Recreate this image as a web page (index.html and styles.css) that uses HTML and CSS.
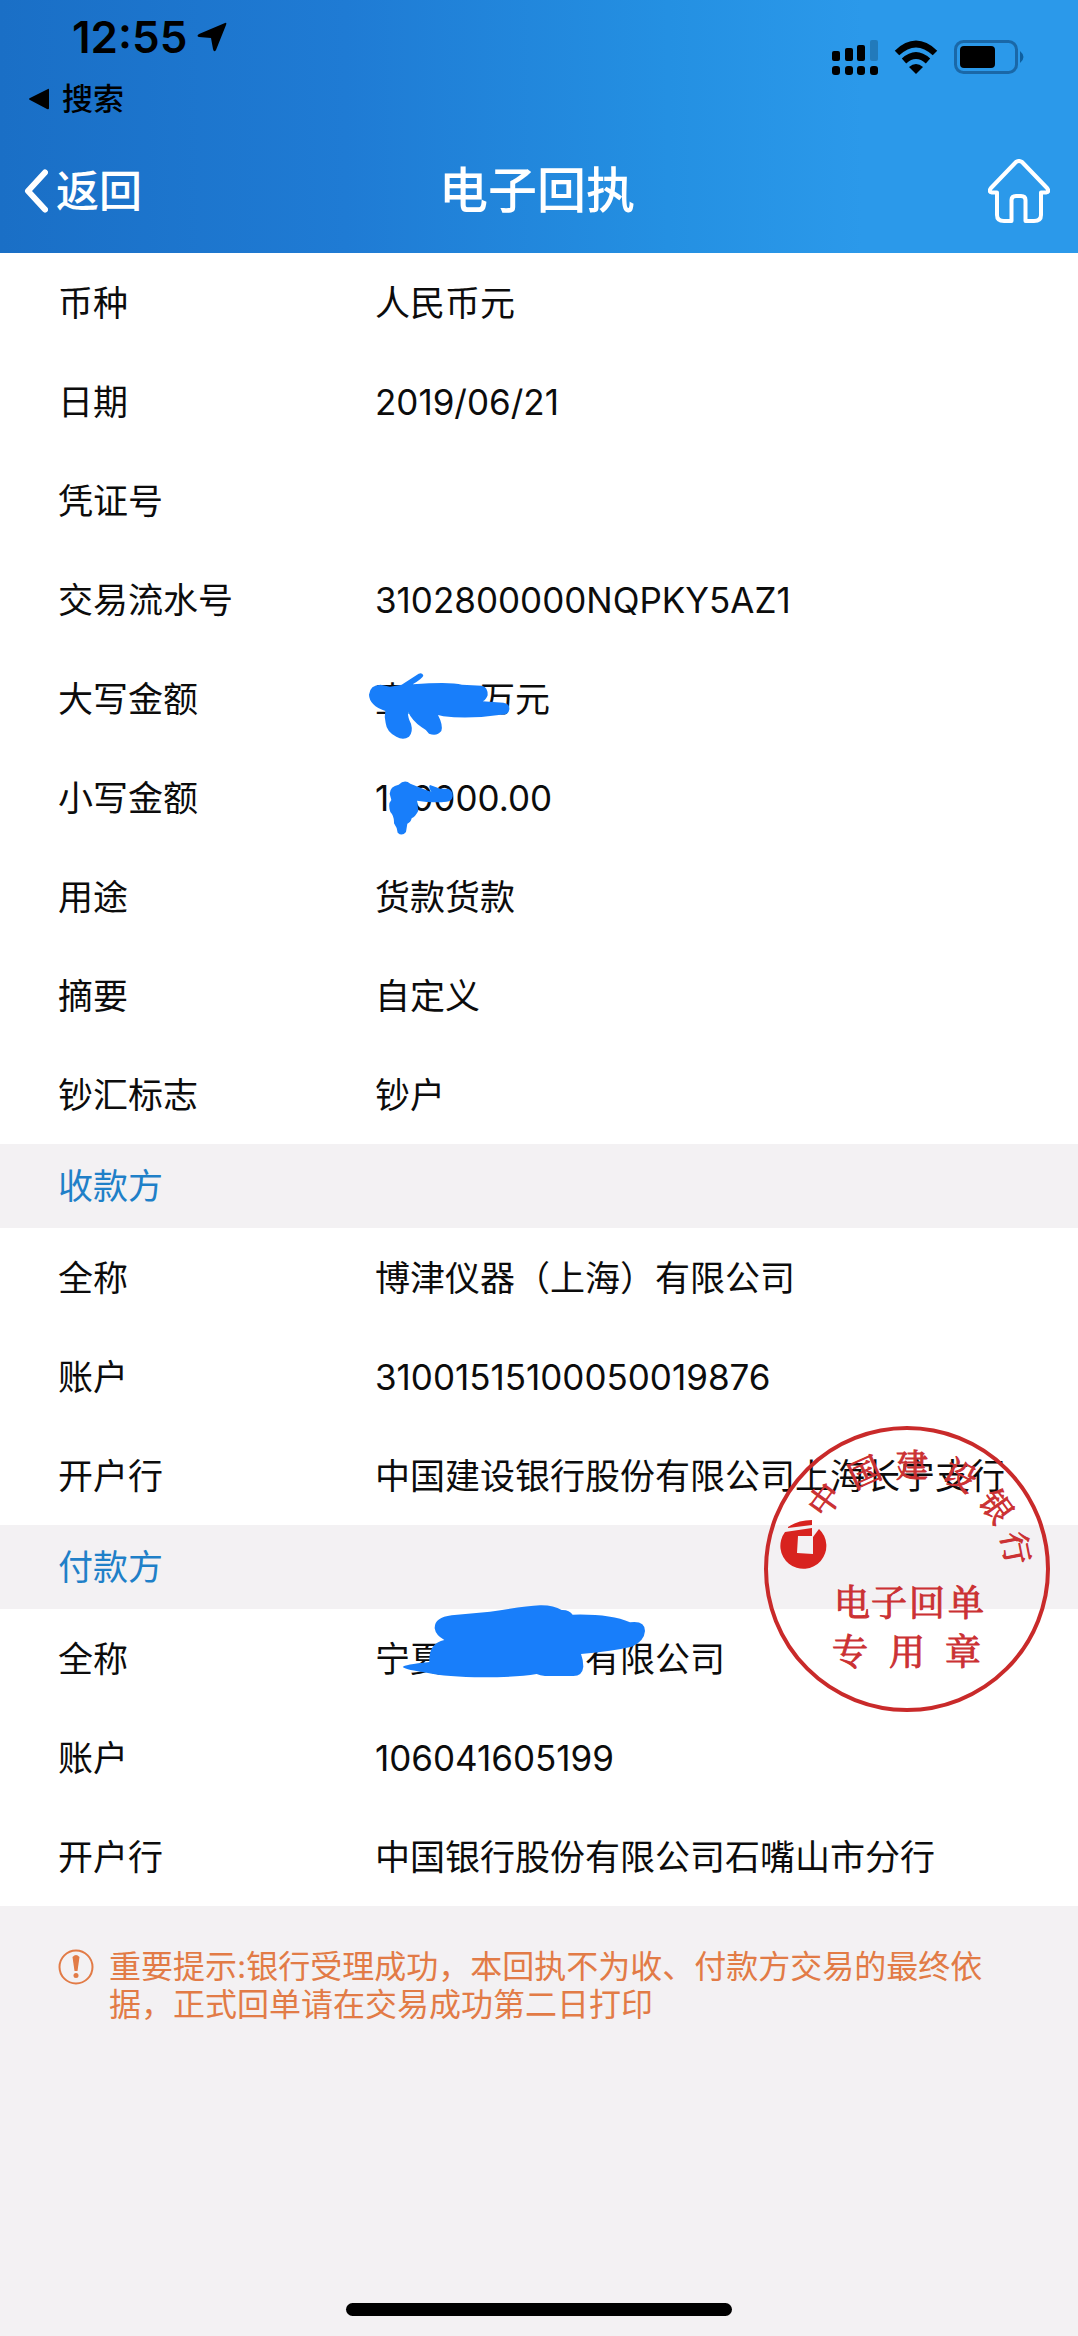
FILE: index.html
```html
<!DOCTYPE html>
<html lang="zh-CN">
<head>
<meta charset="utf-8">
<meta name="viewport" content="width=device-width, initial-scale=1">
<title>电子回执</title>
<link rel="stylesheet" href="styles.css">
</head>
<body>
<header class="header">
  <div class="status">
    <div class="status-left">
      <div class="clock">
        <time>12:55</time>
        <svg width="30" height="30" viewBox="0 0 30 30" aria-hidden="true"><path d="M28 1Q30 0 29 3L19 28Q17 31 16 27L14 16L2 15Q-1 14 2 12Z"/></svg>
      </div>
      <a class="return" href="#">
        <svg width="22" height="22" viewBox="0 0 22 22" aria-hidden="true"><path d="M20 1Q21 0 21 2V20Q21 22 19 21L2 12Q0 11 2 10Z"/></svg>
        搜索
      </a>
    </div>
    <div class="status-icons">
      <svg width="46" height="35" viewBox="0 0 46 35" aria-hidden="true">
        <rect x="0" y="11" width="8" height="10" rx="2"/><rect x="13" y="8" width="8" height="13" rx="2"/><rect x="25" y="5" width="8" height="16" rx="2"/><rect x="38" y="0" width="8" height="21" rx="2" opacity=".2"/>
        <rect x="0" y="26" width="8" height="9" rx="3"/><rect x="13" y="26" width="8" height="9" rx="3"/><rect x="25" y="26" width="8" height="9" rx="3"/><rect x="38" y="26" width="8" height="9" rx="3"/>
      </svg>
      <svg width="44" height="34" viewBox="0 0 44 34" aria-hidden="true">
        <path d="M3 13Q22 -5 41 13" fill="none" stroke="#000" stroke-width="6.5"/>
        <path d="M10 21Q22 10 34 21" fill="none" stroke="#000" stroke-width="6.5"/>
        <path d="M15 27Q22 21 29 27L22 34Z"/>
      </svg>
      <svg width="70" height="34" viewBox="0 0 70 34" aria-hidden="true">
        <rect x="1.500" y="1.500" width="61" height="31" rx="8" fill="none" stroke="#1a68a8" stroke-width="3"/>
        <rect x="6" y="6" width="35" height="22" rx="4"/>
        <path d="M66 11Q73 17 66 23Z" fill="#0f5f9f"/>
      </svg>
    </div>
  </div>
  <nav class="nav">
    <button class="back" type="button">
      <svg width="24" height="44" viewBox="0 0 24 44" aria-hidden="true"><path d="M21 3.500L4 22L21 40.500" fill="none" stroke="#fff" stroke-width="6" stroke-linecap="round" stroke-linejoin="round"/></svg>
      返回
    </button>
    <h1 class="title">电子回执</h1>
    <button class="home" type="button" aria-label="首页">
      <svg width="62" height="64" viewBox="0 0 62 64" aria-hidden="true"><path d="M28 3Q31 1 34 3L59 29Q62 33 58 33.500H53V56Q53 62 46 62H37.500V41Q37.500 37 33 37H28Q23.500 37 23.500 41V62H16Q9 62 9 56V33.500H4Q0 33 3 29Z" fill="none" stroke="#fff" stroke-width="4" stroke-linejoin="round"/></svg>
    </button>
  </nav>
</header>

<main class="receipt">
  <dl class="rows">
    <div class="row"><dt>币种</dt><dd>人民币元</dd></div>
    <div class="row"><dt>日期</dt><dd>2019/06/21</dd></div>
    <div class="row"><dt>凭证号</dt><dd></dd></div>
    <div class="row"><dt>交易流水号</dt><dd>3102800000NQPKY5AZ1</dd></div>
    <div class="row"><dt>大写金额</dt><dd>壹<span class="gap gap-words"></span>万元
      <svg class="mark mark-words" viewBox="84 84 432 216" aria-hidden="true"><path d="M87 158Q90 128 122 128L150 134L185 128L236 95Q248 90 250 101Q247 109 218 127Q330 118 366 128L425 131Q444 135 443 160Q438 174 428 178L490 182Q509 184 508 202Q505 220 483 218Q390 232 310 223L294 219Q310 250 304 267Q291 284 267 275Q258 262 244 255Q216 235 204 209Q203 226 213 245Q220 270 207 284Q190 296 169 284Q140 270 137 243Q132 225 136 207Q88 190 87 158Z"/></svg></dd></div>
    <div class="row"><dt>小写金额</dt><dd>1<span class="gap gap-digit"></span>0000.00
      <svg class="mark mark-digit" viewBox="144 411 198 174" aria-hidden="true"><path d="M149 455Q150 433 176 428Q194 411 211 425L241 437L274 450Q264 434 270 429L301 440L325 440Q339 447 338 463Q335 479 320 479Q279 484 231 476L235 506Q226 524 215 529Q212 542 202 545L198 570Q186 584 173 572Q171 556 162 544Q163 522 151 510Q143 485 154 474Z"/></svg></dd></div>
    <div class="row"><dt>用途</dt><dd>货款货款</dd></div>
    <div class="row"><dt>摘要</dt><dd>自定义</dd></div>
    <div class="row"><dt>钞汇标志</dt><dd>钞户</dd></div>
  </dl>

  <section class="parties">
    <h2 class="section">收款方</h2>
    <dl class="rows">
      <div class="row"><dt>全称</dt><dd>博津仪器（上海）有限公司</dd></div>
      <div class="row"><dt>账户</dt><dd>31001515100050019876</dd></div>
      <div class="row"><dt>开户行</dt><dd>中国建设银行股份有限公司上海长宁支行</dd></div>
    </dl>
    <h2 class="section">付款方</h2>
    <dl class="rows">
      <div class="row"><dt>全称</dt><dd>宁夏<span class="gap gap-name"></span>有限公司
        <svg class="mark mark-name" viewBox="66 72 732 222" aria-hidden="true"><path d="M164 145Q163 112 215 106L330 95Q430 79 480 76Q520 75 545 90Q568 89 578 104Q690 101 750 127Q795 121 795 153Q793 184 755 200Q700 213 603 222Q610 240 610 260Q607 288 580 288H495Q480 286 470 282Q410 292 310 292Q200 291 140 278Q80 270 68 261Q72 254 148 246Q145 190 193 180Q167 166 164 145Z"/></svg></dd></div>
      <div class="row"><dt>账户</dt><dd>106041605199</dd></div>
      <div class="row"><dt>开户行</dt><dd>中国银行股份有限公司石嘴山市分行</dd></div>
    </dl>
    <svg class="seal" viewBox="0 0 286 286" role="img" aria-label="中国建设银行电子回单专用章">
      <circle cx="143" cy="143" r="141" fill="none" stroke="#c92a2a" stroke-width="4"/>
      <g class="seal-arc">
        <text transform="translate(61 74) rotate(-54)" y="11">中</text>
        <text transform="translate(101 47) rotate(-24)" y="11">国</text>
        <text transform="translate(148 40)" y="11">建</text>
        <text transform="translate(196 50) rotate(28)" y="11">设</text>
        <text transform="translate(232 81) rotate(54)" y="11">银</text>
        <text transform="translate(251 122) rotate(79)" y="11">行</text>
      </g>
      <g class="seal-line">
        <text y="190" x="88 125 163 202">电子回单</text>
        <text y="239" x="86 143 199">专用章</text>
      </g>
      <path d="M24 101Q34 94 48 94V99L24 102ZM21 106L48 102V110H34L33 127L49 128V111L55 103A23 23 0 1 1 21 106Z" fill="#d8231f" fill-rule="evenodd"/>
    </svg>
  </section>

  <aside class="notice">
    <svg class="alert" width="36" height="38" viewBox="0 0 36 38" aria-hidden="true"><circle cx="18" cy="19" r="16.500" fill="none" stroke="#e27b46" stroke-width="2"/><path d="M14.500 9Q18 5 21.500 9L19.500 23H16.500Z" fill="#e27b46"/><circle cx="18" cy="27.500" r="2.500" fill="#e27b46"/></svg>
    <p>重要提示:银行受理成功，本回执不为收、付款方交易的最终依据，正式回单请在交易成功第二日打印</p>
  </aside>
</main>
<div class="home-bar"></div>
</body>
</html>
```
FILE: styles.css
```css
* {
  box-sizing: border-box;
  margin: 0;
  padding: 0;
}

body {
  min-height: 100vh;
  display: flex;
  flex-direction: column;
  background: #f3f1f3;
  color: #0c0c0c;
  font-family: Inter, "Noto Sans CJK SC", sans-serif;
  font-size: 35px;
  line-height: 50px;
}

svg {
  display: block;
  flex: none;
}

button {
  border: 0;
  background: none;
  color: inherit;
  font: inherit;
}

.header {
  background: linear-gradient(90deg, #1a6fc6 0%, #1f7bd4 32%, #2490e2 62%, #2b99ea 80%, #2b99ea 100%);
}

.status {
  height: 128px;
  padding: 12px 54px 0 28px;
  display: flex;
  justify-content: space-between;
  color: #000;
}

.clock {
  padding-left: 44px;
  display: flex;
  align-items: center;
  gap: 10px;
  font-size: 44px;
  font-weight: 600;
}

.return {
  margin-top: 12px;
  display: flex;
  align-items: center;
  gap: 12px;
  color: #000;
  font-size: 31px;
  font-weight: 500;
  text-decoration: none;
}

.status-icons {
  height: 66px;
  padding-top: 28px;
  display: flex;
  align-items: flex-start;
  gap: 16px;
}

.nav {
  height: 125px;
  padding: 0 28px 0 24px;
  display: grid;
  grid-template-columns: 1fr auto 1fr;
  align-items: center;
  color: #fff;
}

.back {
  justify-self: start;
  display: flex;
  align-items: center;
  gap: 8px;
  font-size: 43px;
  font-weight: 500;
}

.title {
  font-size: 49px;
  font-weight: 500;
}

.home {
  justify-self: end;
}

.rows {
  background: #fff;
}

.row {
  min-height: 99px;
  padding-left: 58px;
  display: grid;
  grid-template-columns: 317px 1fr;
  align-items: center;
}

.row dd {
  position: relative;
}

.section {
  padding: 17px 58px;
  background: #f3f1f3;
  color: #1f80c8;
  font-size: 35px;
  font-weight: 400;
}

.parties {
  position: relative;
}

.gap {
  display: inline-block;
}

.gap-words {
  width: 70px;
}

.gap-digit {
  width: 22px;
}

.gap-name {
  width: 140px;
}

/* Marker strokes drawn over the private values */
.mark {
  position: absolute;
  fill: #187efa;
}

.mark-words {
  left: -7px;
  top: -4px;
  width: 144px;
}

.mark-digit {
  left: 13px;
  top: 6px;
  width: 66px;
}

.mark-name {
  left: 27px;
  top: -30px;
  width: 244px;
}

.seal {
  position: absolute;
  top: 282px;
  right: 28px;
  width: 286px;
}

.seal text {
  fill: #cb3133;
  stroke: #cb3133;
  stroke-width: 1px;
  font-family: "Noto Serif CJK SC", "Noto Sans CJK SC", serif;
  text-anchor: middle;
}

.seal-arc {
  font-size: 32px;
}

.seal-line {
  font-size: 36px;
}

.notice {
  padding: 42px 72px 42px 58px;
  display: flex;
  gap: 15px;
  color: #e27b46;
  font-size: 32px;
  line-height: 38px;
}

.home-bar {
  width: 386px;
  height: 13px;
  margin: auto auto 20px;
  border-radius: 7px;
  background: #000;
}
```
